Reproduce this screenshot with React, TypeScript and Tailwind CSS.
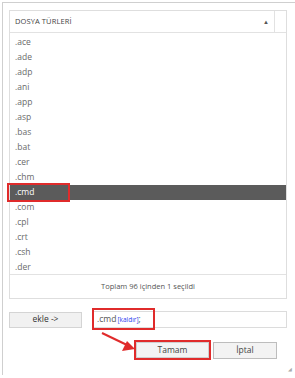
import React from "react";

const items = [".ace", ".ade", ".adp", ".ani", ".app", ".asp", ".bas", ".bat", ".cer", ".chm", ".cmd", ".com", ".cpl", ".crt", ".csh", ".der"];

export default function App() {
  return (
    <div className="w-[295px] h-[378px] bg-white overflow-hidden relative" style={{ fontFamily: '"Open Sans", "Noto Sans", sans-serif' }}>
      <div className="ml-[2px] mt-[2px] h-[373px] border-t border-l border-[#cfcfcf] pt-[7px] pl-[6px]">
        {/* panel */}
        <div className="w-[278px] h-[289px] border border-[#dedede] flex flex-col relative">
          <div className="h-[22px] flex border-b border-[#e2e2e2] shrink-0">
            <div className="flex-1 flex items-center justify-between pl-[5px] pr-[5px] border-r border-[#e2e2e2]">
              <span className="text-[7.5px] text-[#444] tracking-[0.1px]">DOSYA TÜRLERİ</span>
              <span className="text-[6px] text-[#555] leading-none">▲</span>
            </div>
            <div className="w-[11px]"></div>
          </div>
          <div className="h-[241px] overflow-hidden pt-[2px] shrink-0">
            {items.map((it) => (
              <div
                key={it}
                className={
                  "h-[15px] flex items-center pl-[5px] text-[8.5px] " +
                  (it === ".cmd" ? "bg-[#5b5b5b] text-white" : "text-[#6a6a6a]")
                }
              >
                {it}
              </div>
            ))}
          </div>
          <div className="flex-1 border-t border-[#e2e2e2] flex items-center justify-center text-[7.5px] text-[#555]">
            Toplam 96 içinden 1 seçildi
          </div>
          {/* red highlight box around .cmd */}
          <div className="absolute left-[-3px] top-[172px] w-[63px] h-[19px] border-2 border-[#e02b2b]"></div>
        </div>

        {/* add row */}
        <div className="mt-[12px] flex items-center relative">
          <div className="w-[73px] h-[16px] bg-[#f1f1f1] border border-[#d4d4d4] flex items-center justify-center text-[8.5px] text-[#333]">
            ekle -&gt;
          </div>
          <div className="ml-[10px] w-[195px] h-[17px] border border-[#dcdcdc] flex items-center pl-[4px] text-[8.5px] text-[#555]">
            <span>.cmd</span>
            <span className="text-[6.5px] text-[#2a3cf0] ml-[1px]">[kaldır]</span>
            <span>;</span>
          </div>
          <div className="absolute left-[83px] top-[-3px] w-[63px] h-[22px] border-2 border-[#e02b2b]"></div>
        </div>

        {/* buttons */}
        <div className="mt-[12px] flex items-center pl-[125px] relative">
          <div className="w-[77px] h-[20px] border-2 border-[#e02b2b] flex items-center justify-center">
            <div className="w-[73px] h-[16px] bg-[#f3f3f3] border border-[#cfcfcf] flex items-center justify-center text-[8.5px] text-[#444]">
              Tamam
            </div>
          </div>
          <div className="ml-[2px] w-[64px] h-[17px] bg-[#f3f3f3] border border-[#bdbdbd] flex items-center justify-center text-[8.5px] text-[#444]">
            İptal
          </div>
          <svg className="absolute left-[92px] top-[-8px]" width="40" height="24" viewBox="0 0 40 24">
            <line x1="1" y1="1" x2="26" y2="13" stroke="#e02b2b" strokeWidth="2" />
            <polygon points="34,17 21,19 26,9" fill="#e02b2b" />
          </svg>
        </div>
      </div>
      <div className="absolute right-[3px] bottom-[6px] text-[5px] text-[#aaa] leading-none">◢</div>
    </div>
  );
}
